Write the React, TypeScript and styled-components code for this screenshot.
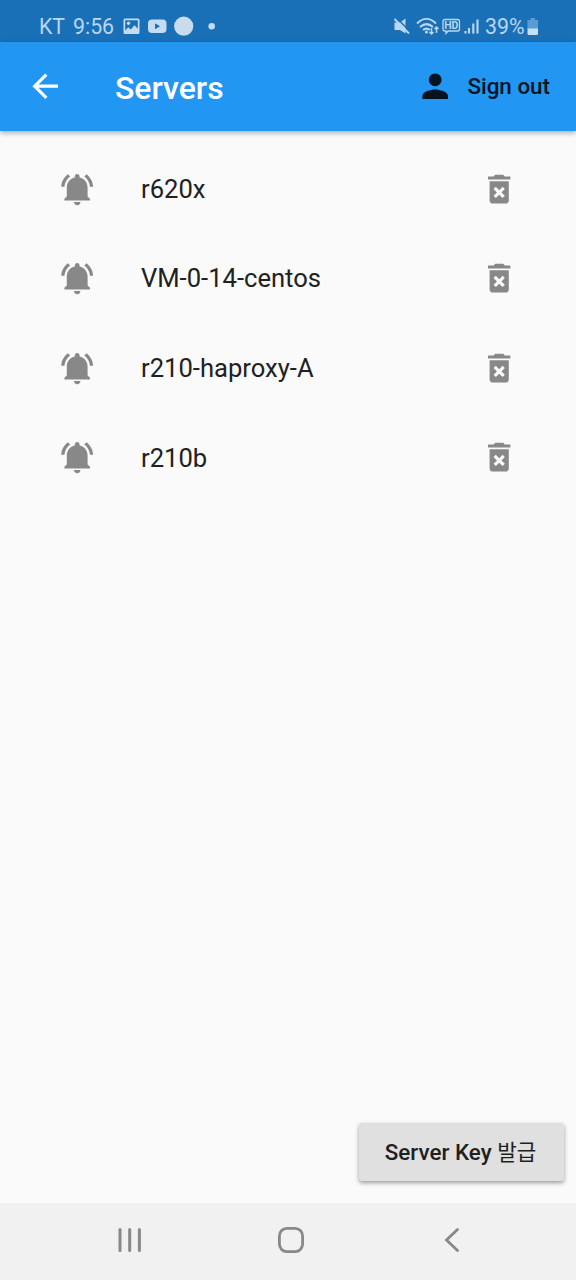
import React from "react";
import styled, { createGlobalStyle } from "styled-components";

const GlobalStyle = createGlobalStyle`
  * { box-sizing: border-box; }
  body { margin: 0; background: #fafafa; font-family: Roboto, "Noto Sans CJK KR", sans-serif; }
  svg { display: block; flex: none; }
`;

const Screen = styled.div`
  width: 576px;
  height: 1280px;
  display: flex;
  flex-direction: column;
  background: #fafafa;
  overflow: hidden;
`;

const StatusBar = styled.div`
  height: 42px;
  flex: none;
  display: flex;
  align-items: center;
  justify-content: space-between;
  padding: 11px 37px 0 39px;
  background: #1a70b7;
  color: #b9d7f1;
`;

const StatusGroup = styled.div`
  display: flex;
  align-items: center;
`;

const StatusText = styled.span<{ $width: number }>`
  width: ${(p) => p.$width}px;
  font-size: 21.3px;
  line-height: 30px;
  white-space: nowrap;
`;

const AppBar = styled.header`
  height: 89px;
  flex: none;
  display: flex;
  align-items: center;
  padding: 0 26px;
  background: #2196f3;
  color: #fff;
  box-shadow: 0 2px 5px rgba(0, 0, 0, 0.32);
  z-index: 1;
`;

const Title = styled.h1`
  flex: 1;
  margin: 3px 0 0 50.5px;
  font-size: 32px;
  line-height: 40px;
  font-weight: 500;
`;

const SignOut = styled.button`
  display: flex;
  align-items: center;
  gap: 13px;
  padding: 0;
  border: 0;
  background: none;
  color: #07131f;
  font: 500 22.4px/30px Roboto, sans-serif;
  white-space: nowrap;
`;

const ServerList = styled.ul`
  flex: 1;
  margin: 0;
  padding: 13px 0 0;
  list-style: none;
`;

const ServerRow = styled.li`
  height: 89.6px;
  display: flex;
  align-items: center;
  padding: 0 58px 0 57.6px;
  color: #888;
`;

const ServerName = styled.span`
  flex: 1;
  margin-left: 45px;
  font-size: 25.6px;
  line-height: 32px;
  color: #212121;
`;

const Footer = styled.div`
  display: flex;
  justify-content: flex-end;
  padding: 0 12.5px 22px;
`;

const KeyButton = styled.button`
  width: 205px;
  height: 58px;
  padding: 0 1px 2px 0;
  border: 0;
  border-radius: 3px;
  background: #e0e0e0;
  color: #1f1f1f;
  font: 500 22.4px/30px Roboto, "Noto Sans CJK KR", sans-serif;
  white-space: nowrap;
  box-shadow: 0 2px 4px rgba(0, 0, 0, 0.38);
`;

const Korean = styled.span`
  font-family: "Noto Sans CJK KR", sans-serif;
  font-weight: 400;
  font-size: 21.2px;
`;

const NavBar = styled.nav`
  height: 77px;
  flex: none;
  display: grid;
  grid-template-columns: repeat(3, 161px);
  justify-content: center;
  justify-items: center;
  align-items: center;
  padding: 0 0 3px 5px;
  background: #f1f1f1;
`;

const paths = {
  back: "M20 11H7.83l5.59-5.59L12 4l-8 8 8 8 1.41-1.41L7.83 13H20v-2z",
  person:
    "M12 12c2.21 0 4-1.79 4-4s-1.79-4-4-4-4 1.79-4 4 1.79 4 4 4zm0 2c-2.67 0-8 1.34-8 4v2h16v-2c0-2.66-5.33-4-8-4z",
  bell: "M7.58 4.08L6.15 2.65C3.75 4.48 2.17 7.3 2.03 10.5h2c.15-2.65 1.51-4.97 3.55-6.42zm12.39 6.42h2c-.15-3.2-1.73-6.02-4.12-7.85l-1.42 1.43c2.02 1.45 3.39 3.77 3.54 6.42zM18.5 11c0-3.2-2-5.7-5-6.32V4c0-.83-.67-1.5-1.5-1.5s-1.5.67-1.5 1.5v.68C7.5 5.3 5.5 7.8 5.5 11v5.500L4 18v1h16v-1l-1.500-1.500zM12 22c.14 0 .27-.01.4-.04.65-.14 1.18-.58 1.44-1.18.1-.24.15-.5.15-.78h-4c.01 1.1.9 2 2.01 2z",
  trash:
    "M6 19c0 1.1.9 2 2 2h8c1.1 0 2-.9 2-2V7H6v12zm2.46-7.12l1.41-1.41L12 12.59l2.12-2.12 1.41 1.41L13.41 14l2.12 2.12-1.41 1.41L12 15.41l-2.12 2.12-1.41-1.41L10.59 14l-2.13-2.12zM15.5 4l-1-1h-5l-1 1H5v2h14V4z",
};

const Icon = ({ name }: { name: keyof typeof paths }) => (
  <svg width="38.4" height="38.4" viewBox="0 0 24 24" fill="currentColor">
    <path d={paths[name]} />
  </svg>
);

const NotificationIcons = () => (
  <svg width="100" height="24" viewBox="0 0 100 24">
    <g fill="#c4dcf1">
      <path
        fillRule="evenodd"
        d="M3 3.500h13a1.500 1.500 0 0 1 1.500 1.500v12.500a1.500 1.500 0 0 1-1.500 1.500H3a1.500 1.500 0 0 1-1.500-1.500V5A1.500 1.500 0 0 1 3 3.500zM3.200 5.200v10.300l3-3.300 2.500 2.200 3.800-4.200 3.300 3.500V5.200z"
      />
      <circle cx="6.500" cy="8.300" r="1.700" />
      <path
        fillRule="evenodd"
        d="M30 4.500h10.500q4 0 4 4V14q0 4-4 4H30q-4 0-4-4V8.500q0-4 4-4zM33 8.200v6.100l5-3z"
      />
      <circle cx="61.700" cy="11.200" r="9.600" fill="#c9dcee" />
      <circle cx="89.700" cy="11.200" r="3.300" />
    </g>
  </svg>
);

const SignalIcons = () => (
  <svg width="92" height="24" viewBox="0 0 92 24" fill="none" stroke="#b9d7f1">
    <path fill="#b9d7f1" stroke="none" d="M1.500 7.500H7L12.500 3.500V18.500L7 15H1.500z" />
    <path stroke="#1a70b7" strokeWidth="1.500" d="M3.200 2.700L18 17.200" />
    <path strokeWidth="2" d="M1.500 4L16 18.500" />
    <g strokeWidth="2">
      <path d="M24 8.500c6-6 13-6 19 0M27 12c4.500-4 8.500-4 13 0M30 15c2.500-2 4.500-2 7 0" />
    </g>
    <circle cx="33.500" cy="17" r="1.600" fill="#b9d7f1" stroke="none" />
    <path strokeWidth="1.500" d="M38.500 13v6M36.500 17l2 2 2-2M43.500 18v-6M41.500 14l2-2 2 2" />
    <path
      strokeWidth="1.300"
      d="M52 4.500h12.500q2 0 2 2V14q0 2-2 2h-9.500l-2 2.500V16h-1q-2 0-2-2V6.500q0-2 2-2z"
    />
    <text
      x="58.300"
      y="14.100"
      textAnchor="middle"
      fill="#b9d7f1"
      stroke="none"
      fontSize="10.500"
      fontWeight="700"
    >
      HD
    </text>
    <path strokeWidth="2.100" d="M72.500 16v2.500M76 13v5.500M80.300 8.500v10M84.500 4.500v14" />
  </svg>
);

const Battery = () => (
  <svg width="12" height="18" viewBox="0 0 12 18">
    <path fill="#5b9bd1" d="M3.500 0h4.500v2h3v9H.5V2h3z" />
    <path fill="#c8e0f5" d="M.5 10.500H11v5q0 1.500-1.500 1.500H2Q.5 17 .5 15.500z" />
  </svg>
);

const servers = ["r620x", "VM-0-14-centos", "r210-haproxy-A", "r210b"];

export default function App() {
  return (
    <>
      <GlobalStyle />
      <Screen>
        <StatusBar>
          <StatusGroup>
            <StatusText $width={34}>KT</StatusText>
            <StatusText $width={49}>9:56</StatusText>
            <NotificationIcons />
          </StatusGroup>
          <StatusGroup>
            <SignalIcons />
            <StatusText $width={42}>39%</StatusText>
            <Battery />
          </StatusGroup>
        </StatusBar>
        <AppBar>
          <Icon name="back" />
          <Title>Servers</Title>
          <SignOut>
            <Icon name="person" />
            Sign out
          </SignOut>
        </AppBar>
        <ServerList>
          {servers.map((name) => (
            <ServerRow key={name}>
              <Icon name="bell" />
              <ServerName>{name}</ServerName>
              <Icon name="trash" />
            </ServerRow>
          ))}
        </ServerList>
        <Footer>
          <KeyButton>
            Server Key <Korean>발급</Korean>
          </KeyButton>
        </Footer>
        <NavBar>
          <svg width="26" height="26" viewBox="0 0 26 26" stroke="#888" strokeWidth="3" strokeLinecap="round">
            <path d="M3 2.500v21M12.700 2.500v21M22.400 2.500v21" />
          </svg>
          <svg width="28" height="28" viewBox="0 0 28 28" fill="none" stroke="#888" strokeWidth="2.800">
            <rect x="2.400" y="2.400" width="23.200" height="23.200" rx="7.500" />
          </svg>
          <svg
            width="18"
            height="26"
            viewBox="0 0 18 26"
            fill="none"
            stroke="#888"
            strokeWidth="2.800"
            strokeLinecap="round"
          >
            <path d="M14.500 2.500L3.500 13l11 10.500" />
          </svg>
        </NavBar>
      </Screen>
    </>
  );
}
